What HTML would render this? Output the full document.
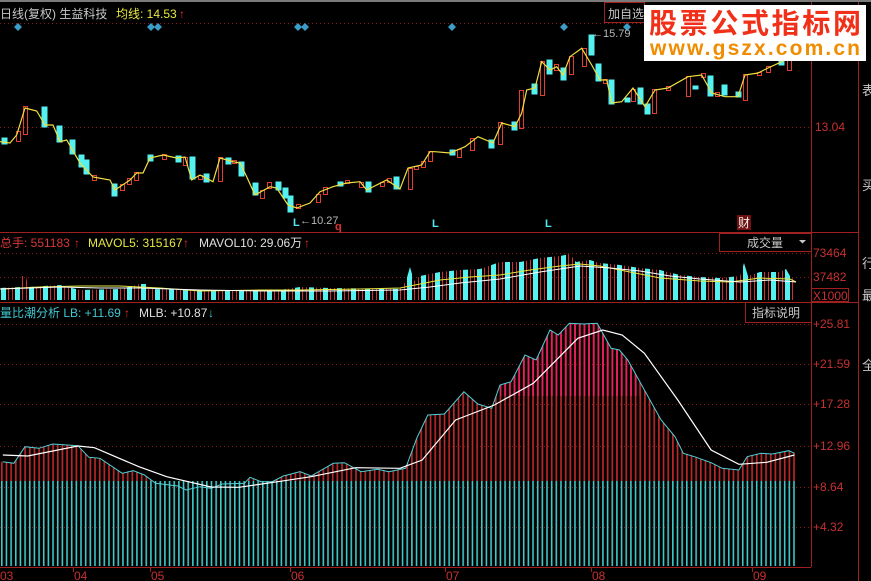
<!DOCTYPE html>
<html><head><meta charset="utf-8"><style>
html,body{margin:0;padding:0;background:#000;width:871px;height:581px;overflow:hidden}
svg{display:block}
text{font-family:"Liberation Sans","Noto Sans CJK SC",sans-serif}
</style></head><body>
<svg width="871" height="581" viewBox="0 0 871 581" xmlns="http://www.w3.org/2000/svg">
<defs>
<pattern id="pc" x="1" y="0" width="4.66" height="10" patternUnits="userSpaceOnUse"><rect x="0" y="0" width="1.6" height="10" fill="#3fc8c8"/></pattern>
<pattern id="pr" x="1" y="0" width="4.66" height="10" patternUnits="userSpaceOnUse"><rect x="0" y="0" width="1.7" height="10" fill="#b82828"/></pattern>
<pattern id="pp" x="1" y="0" width="4.66" height="10" patternUnits="userSpaceOnUse"><rect x="0" y="0" width="1.8" height="10" fill="#e8205a"/></pattern>
<pattern id="pv" x="1" y="0" width="14" height="80" patternUnits="userSpaceOnUse"><rect x="0" y="0" width="5" height="80" fill="#55f0f0"/><rect x="7.5" y="0.5" width="4" height="80" fill="none" stroke="#d03030"/></pattern>
<clipPath id="lbclip"><polygon points="2.8,461.7 13.9,463.3 25,446.7 38.9,448.3 52.8,444 77.8,445.7 88.9,457.3 100,458.3 122.2,473.3 133.3,470.7 144.4,475 155.6,483.3 177.8,486 186.1,490 200,486.7 211.1,488.3 222.2,484 244.4,483.3 250,477.3 261.1,481.7 272.2,481.7 283.3,476 300,471.7 311.1,476 333.3,463.3 344.4,462.7 361.1,471.7 377.8,469.3 388.9,471.7 405.6,468.3 416.7,438.3 427.8,415 444.4,414 463.9,391.7 477.8,404 491.7,408.3 500,385 511.1,381.7 525,355 536.1,360 550,330 558.3,335 569.4,323.3 583.3,324 597.2,323.3 611.1,348.3 619.4,350 627.8,360 644.4,390 661.1,420 675,436.7 683.3,453.3 694.4,456.7 711.1,462.7 722.2,468.3 738.9,470 747.2,456.7 761.1,453.3 772.2,454 788.9,450.7 796,453.3 796,566 0,566 0,461.7"/></clipPath>
<clipPath id="vclip"><polygon points="0,288 20,287 22,276 26,276 28,287 60,285 80,290 120,289 140,284 146,284 148,289 200,290 280,290 300,287 330,288 400,289 406,281 410,267 414,281 420,276 440,272 460,270 480,269 500,262 520,262 540,258 560,256 570,254 576,262 590,260 600,263 620,265 640,268 660,270 680,275 700,277 720,278 740,276 744,263 748,276 760,272 780,272 786,269 790,276 796,282 796,300 0,300"/></clipPath>
</defs>
<rect width="871" height="581" fill="#000"/>
<rect x="0" y="0" width="871" height="2" fill="#7a7a7a"/>
<g stroke="#8a1818" stroke-dasharray="1,3" stroke-width="1">
<line x1="0" y1="23.5" x2="811" y2="23.5"/>
<line x1="0" y1="127.5" x2="811" y2="127.5"/>
<line x1="0" y1="253.5" x2="811" y2="253.5"/>
<line x1="0" y1="277.5" x2="811" y2="277.5"/>
<line x1="0" y1="324.5" x2="811" y2="324.5"/>
<line x1="0" y1="364.5" x2="811" y2="364.5"/>
<line x1="0" y1="404.5" x2="811" y2="404.5"/>
<line x1="0" y1="446.5" x2="811" y2="446.5"/>
<line x1="0" y1="487.5" x2="811" y2="487.5"/>
<line x1="0" y1="527.5" x2="811" y2="527.5"/>
</g>
<g stroke="#a02020" stroke-width="1">
<line x1="0" y1="232.5" x2="858" y2="232.5"/>
<line x1="0" y1="302.5" x2="858" y2="302.5"/>
<line x1="811.5" y1="2" x2="811.5" y2="567"/>
<line x1="858.5" y1="2" x2="858.5" y2="581"/>
</g>
<line x1="0" y1="567.5" x2="811" y2="567.5" stroke="#a02020"/>
<text x="0" y="18" font-size="12" fill="#c8c8c8">日线(复权)  生益科技</text>
<text x="116" y="18" font-size="12" fill="#e8e840">均线: 14.53</text>
<text x="179" y="18" font-size="12" fill="#e03030" font-weight="bold">↑</text>
<rect x="604.5" y="2.5" width="40" height="20" fill="#000" stroke="#a02020"/>
<text x="608" y="18" font-size="12" fill="#c8c8c8">加自选</text>
<g fill="#3a9ec8">
<path d="M18 23l4 4-4 4-4-4z"/><path d="M151 23l4 4-4 4-4-4z"/><path d="M158 23l4 4-4 4-4-4z"/>
<path d="M298 23l4 4-4 4-4-4z"/><path d="M305 23l4 4-4 4-4-4z"/><path d="M452 23l4 4-4 4-4-4z"/><path d="M564 23l4 4-4 4-4-4z"/><path d="M627 23l4 4-4 4-4-4z"/>
</g>
<g stroke-width="1">
<g fill="#55f0f0" stroke="#55f0f0">
<rect x="2" y="138" width="5" height="6"/><rect x="42" y="107" width="5" height="20"/><rect x="57" y="126" width="5" height="16"/><rect x="70" y="140" width="5" height="14"/>
<rect x="79" y="155" width="5" height="12"/><rect x="84" y="160" width="5" height="14"/><rect x="112" y="184" width="5" height="12"/><rect x="148" y="155" width="5" height="6"/>
<rect x="176" y="156" width="5" height="6"/><rect x="190" y="157" width="5" height="22"/><rect x="204" y="174" width="5" height="8"/><rect x="226" y="158" width="5" height="6"/>
<rect x="239" y="162" width="5" height="14"/><rect x="253" y="183" width="5" height="12"/><rect x="276" y="182" width="5" height="8"/><rect x="283" y="188" width="5" height="10"/><rect x="288" y="196" width="5" height="16"/>
<rect x="338" y="182" width="5" height="4"/><rect x="366" y="182" width="5" height="10"/><rect x="394" y="177" width="5" height="12"/>
<rect x="450" y="150" width="5" height="5"/><rect x="489" y="140" width="5" height="8"/><rect x="512" y="122" width="5" height="8"/><rect x="532" y="84" width="5" height="10"/>
<rect x="547" y="60" width="5" height="14"/><rect x="561" y="68" width="5" height="12"/><rect x="589" y="35" width="5" height="20"/><rect x="596" y="64" width="5" height="17"/>
<rect x="609" y="80" width="5" height="24"/><rect x="625" y="98" width="5" height="4"/><rect x="638" y="88" width="5" height="16"/><rect x="645" y="104" width="5" height="10"/>
<rect x="693" y="86" width="5" height="3"/><rect x="708" y="76" width="5" height="20"/><rect x="722" y="85" width="5" height="10"/><rect x="736" y="92" width="5" height="5"/>
<rect x="779" y="55" width="5" height="10"/>
</g>
<g fill="none" stroke="#e04030">
<rect x="16.5" y="131.5" width="4" height="10"/><rect x="23.5" y="106.5" width="4" height="28"/><rect x="92.5" y="175.5" width="4" height="5"/><rect x="120.5" y="184.5" width="4" height="6"/>
<rect x="127.5" y="178.5" width="4" height="6"/><rect x="134.5" y="172.5" width="4" height="8"/><rect x="162.5" y="154.5" width="4" height="5"/><rect x="183.5" y="157.5" width="4" height="8"/>
<rect x="198.5" y="175.5" width="4" height="4"/><rect x="218.5" y="157.5" width="4" height="24"/><rect x="232.5" y="160.5" width="4" height="3"/><rect x="260.5" y="190.5" width="4" height="8"/>
<rect x="267.5" y="182.5" width="4" height="6"/><rect x="296.5" y="204.5" width="4" height="4"/><rect x="316.5" y="194.5" width="4" height="8"/><rect x="323.5" y="187.5" width="4" height="7"/>
<rect x="345.5" y="180.5" width="4" height="3"/><rect x="359.5" y="182.5" width="4" height="5"/><rect x="380.5" y="182.5" width="4" height="4"/><rect x="387.5" y="178.5" width="4" height="4"/>
<rect x="408.5" y="168.5" width="4" height="21"/><rect x="414.5" y="166.5" width="4" height="3"/><rect x="421.5" y="161.5" width="4" height="6"/><rect x="428.5" y="151.5" width="4" height="10"/>
<rect x="457.5" y="149.5" width="4" height="8"/><rect x="470.5" y="138.5" width="4" height="12"/><rect x="498.5" y="122.5" width="4" height="22"/><rect x="519.5" y="90.5" width="4" height="38"/>
<rect x="540.5" y="61.5" width="4" height="34"/><rect x="554.5" y="64.5" width="4" height="6"/><rect x="569.5" y="56.5" width="4" height="18"/><rect x="582.5" y="48.5" width="4" height="18"/>
<rect x="603.5" y="79.5" width="4" height="4"/><rect x="631.5" y="89.5" width="4" height="12"/><rect x="652.5" y="89.5" width="4" height="24"/><rect x="666.5" y="86.5" width="4" height="4"/>
<rect x="686.5" y="76.5" width="4" height="20"/><rect x="701.5" y="73.5" width="4" height="4"/><rect x="715.5" y="92.5" width="4" height="4"/><rect x="743.5" y="74.5" width="4" height="26"/>
<rect x="757.5" y="72.5" width="4" height="3"/><rect x="766.5" y="66.5" width="4" height="6"/><rect x="787.5" y="60.5" width="4" height="10"/>
</g>
</g>
<polyline fill="none" stroke="#f0e040" stroke-width="1.2" points="0,141.7 10,143 16.7,135 25,108 36.7,111 45,125 53,125 60,141.7 66.7,140 80,163 93,177 110,180 115,190 130,180 136.7,173 143,173 150,158 163,155 176.7,158 185,157 191.7,180 200,175 213,181.7 220,158 233,161.7 240,163 246.7,176.7 255,195 270,186.7 276.7,188 288,205 296.7,208 310,203 320,191.7 333,186.7 346.7,183 360,181.7 366.7,190 386.7,180 400,189 408,168 421.7,165 430,151.7 435,151.7 450,153 465,146.7 478,136.7 493,143 501.7,123 515,126.7 521.7,113 526.7,90 535,88 541.7,61.7 550,70 556.7,66.7 563,75 570,56.7 581.7,48.3 591.7,65 600,80 606.7,80 611.7,103 621.7,101.7 633,88 645,106.7 655,90 668,88 688,76.7 701.7,75 711.7,93 725,96.7 738,96.7 745,75 758,73 768,68 781.7,61.7 788,56.7"/>
<text x="293" y="226" font-size="11" fill="#55e8f0" font-weight="bold">L</text>
<text x="300" y="224" font-size="11" fill="#b8b8b8">←10.27</text>
<text x="335" y="230" font-size="11" fill="#e03030" font-weight="bold">q</text>
<text x="432" y="227" font-size="11" fill="#55e8f0" font-weight="bold">L</text>
<text x="545" y="227" font-size="11" fill="#55e8f0" font-weight="bold">L</text>
<text x="592" y="37" font-size="11" fill="#b8b8b8">←15.79</text>
<rect x="737" y="215" width="14" height="15" fill="#701010"/>
<text x="738" y="227" font-size="12" fill="#f0f0f0">财</text>
<text x="815" y="131" font-size="12" fill="#c83030">13.04</text>
<rect x="644" y="5" width="222" height="56" fill="#fff"/>
<text x="755" y="33" font-size="28" font-weight="bold" fill="#f03018" text-anchor="middle" textLength="212">股票公式指标网</text>
<text x="755" y="55" font-size="21" font-weight="bold" fill="#f08c00" text-anchor="middle" textLength="210">www.gszx.com.cn</text>
<text x="0" y="247" font-size="12" fill="#d83838">总手: 551183</text>
<text x="74" y="247" font-size="12" fill="#e03030" font-weight="bold">↑</text>
<text x="88" y="247" font-size="12" fill="#e8e840">MAVOL5: 315167</text>
<text x="183" y="247" font-size="12" fill="#e03030" font-weight="bold">↑</text>
<text x="199" y="247" font-size="12" fill="#e0e0e0">MAVOL10: 29.06万</text>
<text x="304" y="247" font-size="12" fill="#e03030" font-weight="bold">↑</text>
<rect x="719.5" y="233.5" width="92" height="18" fill="#000" stroke="#a02020"/>
<text x="747" y="247" font-size="12" fill="#c8c8c8">成交量</text>
<path d="M799 240h7l-3.5 3.5z" fill="#c8c8c8"/>
<text x="813" y="257" font-size="12" fill="#c83030">73464</text>
<text x="813" y="281" font-size="12" fill="#c83030">37482</text>
<rect x="811.5" y="288.5" width="37" height="13" fill="none" stroke="#a02020"/>
<text x="813" y="300" font-size="12" fill="#c83030">X1000</text>
<rect x="0" y="250" width="796" height="51" fill="url(#pv)" clip-path="url(#vclip)"/>
<polyline fill="none" stroke="#e8e840" points="0,289 40,287 80,286 120,286 160,288 200,291 260,290 300,290 360,289 400,288 420,284 440,280 470,277 500,275 530,270 560,266 580,264 600,266 620,270 640,274 660,278 700,281 730,282 760,278 790,279 796,282"/>
<polyline fill="none" stroke="#ffffff" points="0,289 60,287 100,288 140,288 200,290 260,291 330,291 400,290 430,287 460,283 500,279 540,272 580,266 610,268 640,271 670,276 700,279 740,282 770,280 796,282"/>
<text x="0" y="317" font-size="12" fill="#40c8d0">量比潮分析 LB: +11.69</text>
<text x="124" y="317" font-size="12" fill="#e03030" font-weight="bold">↑</text>
<text x="139" y="317" font-size="12" fill="#e0e0e0">MLB: +10.87</text>
<text x="208" y="317" font-size="12" fill="#40c8d0" font-weight="bold">↓</text>
<rect x="745.5" y="302.5" width="66" height="20" fill="#000" stroke="#a02020"/>
<text x="752" y="317" font-size="12" fill="#c8c8c8">指标说明</text>
<g font-size="12" fill="#c83030">
<text x="813" y="328">+25.81</text><text x="813" y="368">+21.59</text><text x="813" y="408">+17.28</text><text x="813" y="450">+12.96</text><text x="813" y="491">+8.64</text><text x="813" y="531">+4.32</text>
</g>
<rect x="0" y="300" width="796" height="181" fill="url(#pr)" clip-path="url(#lbclip)"/>
<rect x="500" y="300" width="140" height="96" fill="url(#pp)" clip-path="url(#lbclip)"/>
<rect x="0" y="481" width="796" height="85" fill="url(#pc)"/>
<polyline fill="none" stroke="#50d0d8" stroke-width="1" points="2.8,461.7 13.9,463.3 25,446.7 38.9,448.3 52.8,444 77.8,445.7 88.9,457.3 100,458.3 122.2,473.3 133.3,470.7 144.4,475 155.6,483.3 177.8,486 186.1,490 200,486.7 211.1,488.3 222.2,484 244.4,483.3 250,477.3 261.1,481.7 272.2,481.7 283.3,476 300,471.7 311.1,476 333.3,463.3 344.4,462.7 361.1,471.7 377.8,469.3 388.9,471.7 405.6,468.3 416.7,438.3 427.8,415 444.4,414 463.9,391.7 477.8,404 491.7,408.3 500,385 511.1,381.7 525,355 536.1,360 550,330 558.3,335 569.4,323.3 583.3,324 597.2,323.3 611.1,348.3 619.4,350 627.8,360 644.4,390 661.1,420 675,436.7 683.3,453.3 694.4,456.7 711.1,462.7 722.2,468.3 738.9,470 747.2,456.7 761.1,453.3 772.2,454 788.9,450.7 794.4,453.3"/>
<polyline fill="none" stroke="#ffffff" stroke-width="1.2" points="2.8,455 27.8,456 77.8,446 94.4,447.7 138.9,466.7 166.7,476.7 211,487 238.9,487.3 277.8,481.7 311.1,476.7 355.6,467.7 400,468.3 422.2,460 455.6,420 494.4,405 533.3,383.3 577.8,338.3 602.8,330 622.2,335 644.4,353.3 677.8,400 711.1,450 738.9,464.3 766.7,462.3 794.4,455"/>
<g stroke="#a02020"><line x1="73.5" y1="567" x2="73.5" y2="572"/><line x1="150.5" y1="567" x2="150.5" y2="572"/><line x1="290.5" y1="567" x2="290.5" y2="572"/><line x1="445.5" y1="567" x2="445.5" y2="572"/><line x1="591.5" y1="567" x2="591.5" y2="572"/><line x1="752.5" y1="567" x2="752.5" y2="572"/></g>
<g font-size="12" fill="#c83030">
<text x="0" y="580">03</text><text x="74" y="580">04</text><text x="151" y="580">05</text><text x="291" y="580">06</text><text x="446" y="580">07</text><text x="592" y="580">08</text><text x="753" y="580">09</text>
</g>
<g font-size="13" fill="#c8c8c8"><text x="862" y="95">表</text><text x="862" y="190">买</text><text x="862" y="268">行</text><text x="862" y="300">最</text><text x="862" y="370">全</text></g>
</svg>
</body></html>
